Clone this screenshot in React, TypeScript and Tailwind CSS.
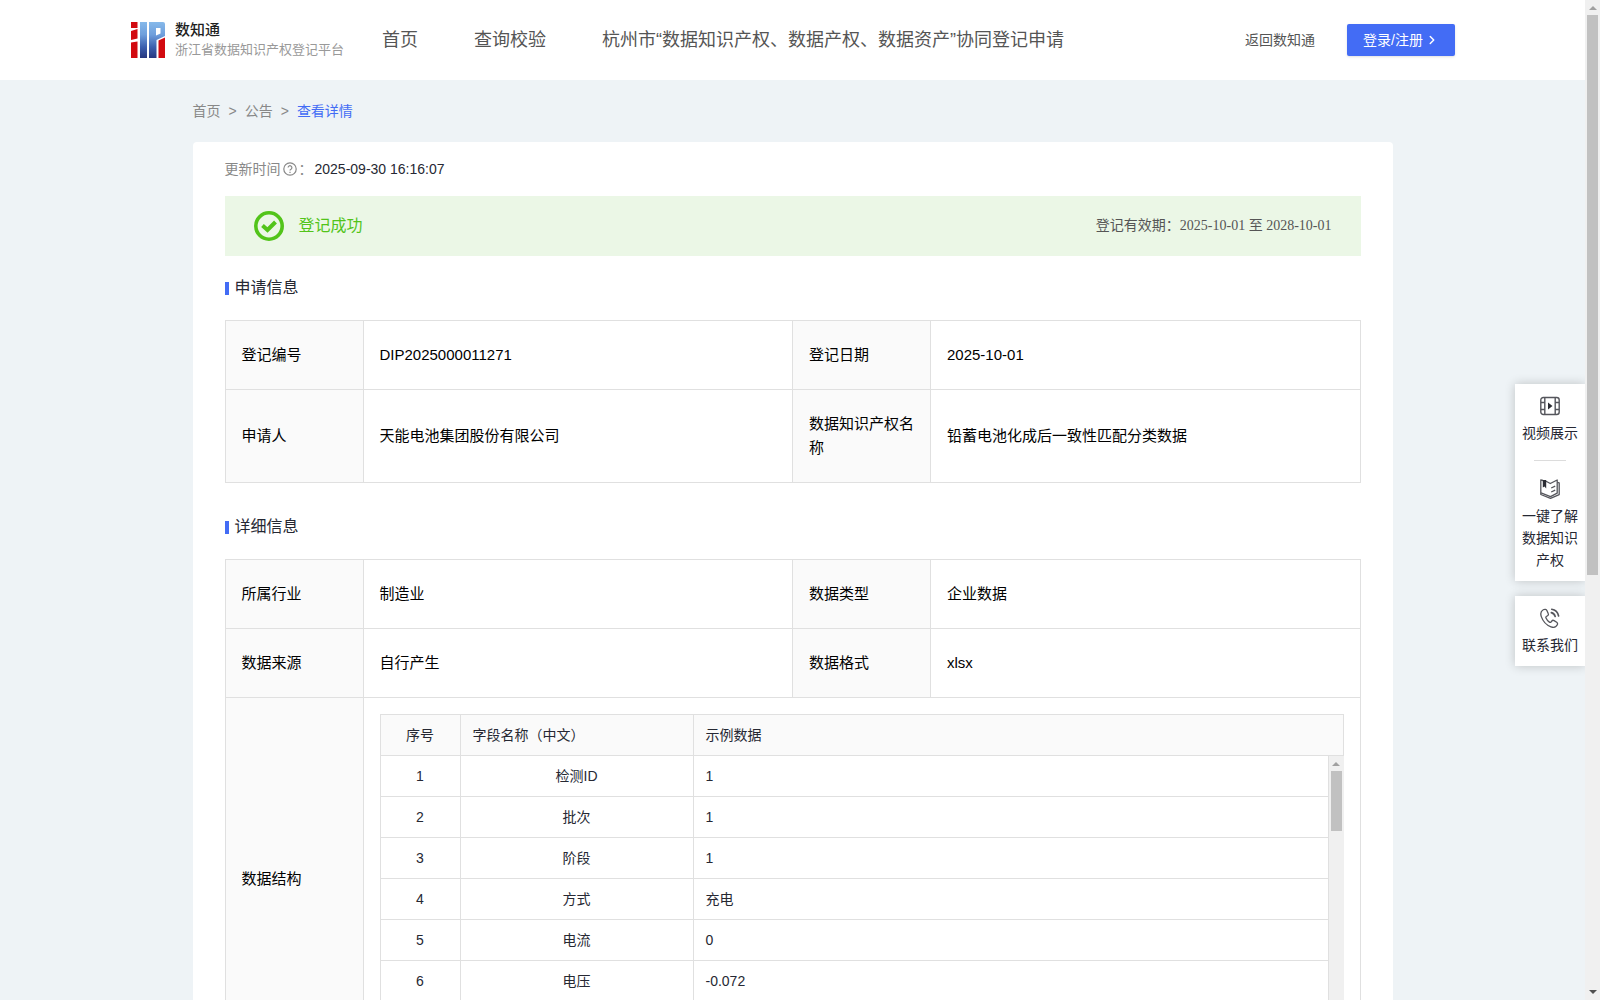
import React from 'react';
import { ChevronRight } from 'lucide-react';

interface FieldRow {
  name: string;
  sample: string;
}

const navItems = ['首页', '查询校验', '杭州市“数据知识产权、数据产权、数据资产”协同登记申请'];

const fields: FieldRow[] = [
  { name: '检测ID', sample: '1' },
  { name: '批次', sample: '1' },
  { name: '阶段', sample: '1' },
  { name: '方式', sample: '充电' },
  { name: '电流', sample: '0' },
  { name: '电压', sample: '-0.072' },
];

const Logo = () => (
  <svg width="34" height="36" viewBox="0 0 34 36" aria-hidden="true">
    <defs>
      <linearGradient id="logo-blue" gradientUnits="userSpaceOnUse" x1="0" y1="0" x2="0" y2="36">
        <stop offset="0" stopColor="#86b9ea" />
        <stop offset="0.35" stopColor="#6f9fdc" />
        <stop offset="0.7" stopColor="#3c5fae" />
        <stop offset="1" stopColor="#27377f" />
      </linearGradient>
    </defs>
    <path d="M0 0h6.500v6H0zM0 9l6.500-2v9.500L0 18zM0 20.500l6.500-1V36H0z" fill="#d20a10" />
    <path d="M9 0h7v36H9z" fill="url(#logo-blue)" />
    <path d="M18 0h14q2 0 2 2v12l-8.500 4v18H18z" fill="url(#logo-blue)" />
    <path d="M25 6h4.500v5.500L25 13.500z" fill="#fff" />
    <path d="M27.500 18.500l6.500-3V36h-6.500z" fill="#d20a10" />
  </svg>
);

const VideoIcon = () => (
  <svg width="20" height="20" viewBox="0 0 20 20" fill="none" stroke="#55565c" strokeWidth="1.4" aria-hidden="true">
    <rect x="0.8" y="1.5" width="18.4" height="17" rx="2.5" />
    <path d="M4.800 1.500v17M15.200 1.500v17M1 6.500h3.800M1 13.500h3.800M15.200 6.500H19M15.200 13.500H19" />
    <path d="M8 6.500l4.500 3.500L8 13.500z" fill="#2b2c33" stroke="none" />
  </svg>
);

const BookIcon = () => (
  <svg width="20" height="20" viewBox="0 0 20 20" fill="none" stroke="#55565c" strokeWidth="1.3" strokeLinejoin="round" aria-hidden="true">
    <path d="M3 1.500L.8 1v14.500l9.700 3.900 8.700-3.800V3.800l-2-.5" />
    <path d="M6 2.200l4.300 2.300L17.200 1v13.200l-6.700 3.400L1 13.800" />
    <path d="M11.200 9l4-1.800M11.200 13l4-1.800" />
    <path d="M2.800 1h3.400v8.500L4.500 7.600 2.800 8.400z" fill="#2b2c33" stroke="none" />
  </svg>
);

const PhoneIcon = () => (
  <svg width="20" height="20" viewBox="0 0 20 20" fill="none" stroke="#55565c" strokeWidth="1.3" strokeLinejoin="round" strokeLinecap="round" aria-hidden="true">
    <path d="M3.200 1.800C1 3 .3 5.600 1.300 8.600c1.700 4.800 5.200 8.600 9.700 10.200 2.800 1 5.400.1 6.400-2.200.4-1 .1-1.700-.7-2.300l-2.600-1.700c-.9-.5-1.700-.4-2.300.4l-.8 1c-.5.5-1 .5-1.600.1-1.500-1-2.700-2.500-3.400-4.100-.3-.7-.2-1.200.4-1.500l1.100-.7c.9-.5 1.100-1.300.7-2.200L7 2.700C6.300 1.200 4.700.9 3.200 1.800z" />
    <path d="M11.300 4.600c2 .5 3.400 1.900 3.900 3.900M11.700 1.300c3.600.6 6.200 3.200 6.900 6.700" strokeWidth="1.600" />
  </svg>
);

const SectionTitle = ({ children }: { children: React.ReactNode }) => (
  <h2 className="flex h-16 items-center gap-1.5 text-base text-[#262833]">
    <span className="h-[13px] w-1 bg-[#436cf5]" />
    {children}
  </h2>
);

const Label = ({ children }: { children: React.ReactNode }) => (
  <th scope="row" className="w-[138px] border border-[#e0e0e0] bg-[#fafafa] px-4 py-[22px] text-left font-normal">
    {children}
  </th>
);

const Value = ({ children }: { children: React.ReactNode }) => (
  <td className="border border-[#e0e0e0] px-4 py-[22px]">{children}</td>
);

const InfoTable = ({ children }: { children: React.ReactNode }) => (
  <table className="w-full table-fixed border-collapse text-[15px] leading-6 text-black">
    <tbody>{children}</tbody>
  </table>
);

const ArrowUp = () => (
  <svg className="shrink-0" width="8" height="4" viewBox="0 0 8 4" aria-hidden="true">
    <path d="M4 0l4 4H0z" fill="#a0a0a0" />
  </svg>
);

const DataStructure = () => (
  <div className="text-sm text-[#262833]">
    <table className="w-full table-fixed border-separate border-spacing-0 border border-[#e0e0e0] bg-[#fafafa]">
      <thead>
        <tr className="h-10">
          <th className="w-20 border-r border-[#e0e0e0] font-normal">序号</th>
          <th className="w-[233px] border-r border-[#e0e0e0] px-3 text-left font-normal">字段名称（中文）</th>
          <th className="px-3 text-left font-normal">示例数据</th>
        </tr>
      </thead>
    </table>
    <div className="flex h-[287px] overflow-hidden">
      <div className="flex-1">
        <table className="w-full table-fixed border-separate border-spacing-0">
          <tbody>
            {fields.map((field, index) => (
              <tr key={field.name} className="h-[41px]">
                <td className="w-[81px] border-x border-b border-[#e0e0e0] text-center">{index + 1}</td>
                <td className="w-[233px] border-r border-b border-[#e0e0e0] text-center">{field.name}</td>
                <td className="border-r border-b border-[#e0e0e0] px-3">{field.sample}</td>
              </tr>
            ))}
          </tbody>
        </table>
      </div>
      <div className="flex w-[15px] flex-col items-center bg-[#f0f0f0] pt-1.5">
        <ArrowUp />
        <div className="mt-[5px] h-[60px] w-[11px] bg-[#c1c1c1]" />
      </div>
    </div>
  </div>
);

const Header = () => (
  <header className="flex h-20 items-center bg-white px-[130px] pb-px">
    <a href="#" className="ml-px flex items-center gap-2.5">
      <Logo />
      <span className="flex flex-col">
        <span className="text-[15px] leading-5 font-medium text-[#1f1f1f]">数知通</span>
        <span className="text-[13px] leading-5 text-[#999]">浙江省数据知识产权登记平台</span>
      </span>
    </a>
    <nav className="ml-[38px] flex gap-14 text-lg whitespace-nowrap text-[#555]">
      {navItems.map((item) => (
        <a key={item} href="#">{item}</a>
      ))}
    </nav>
    <a href="#" className="ml-auto text-sm whitespace-nowrap text-[#555]">返回数知通</a>
    <button type="button" className="ml-8 flex h-8 w-[108px] items-center rounded-xs bg-[#436cf5] pl-4 text-sm text-white shadow-sm">
      登录/注册
      <ChevronRight size={14} strokeWidth={2.5} className="ml-0.5" />
    </button>
  </header>
);

const sideItem = 'flex w-full flex-col items-center text-sm leading-[22px] text-[#262833]';

const SideBar = () => (
  <aside className="absolute top-[384px] right-0 flex w-[70px] flex-col gap-[15px]">
    <div className="flex flex-col items-center bg-white px-1.5 pt-3 pb-2.5 shadow-[0_0_10px_rgba(0,0,0,0.2)]">
      <button type="button" className={sideItem}>
        <VideoIcon />
        <span className="mt-1.5">视频展示</span>
      </button>
      <hr className="mt-4 mb-[18px] w-8 border-[#dcdcdc]" />
      <button type="button" className={sideItem}>
        <BookIcon />
        <span className="mt-1.5">一键了解数据知识产权</span>
      </button>
    </div>
    <div className="bg-white px-1.5 pt-3 pb-2.5 shadow-[0_0_10px_rgba(0,0,0,0.2)]">
      <button type="button" className={sideItem}>
        <PhoneIcon />
        <span className="mt-1.5">联系我们</span>
      </button>
    </div>
  </aside>
);

export default function App() {
  return (
    <div className="flex h-screen overflow-hidden bg-[#eef3f6] font-['Liberation_Sans','Noto_Sans_CJK_SC',sans-serif]">
      <div className="relative min-w-0 flex-1 overflow-hidden">
        <Header />
        <main className="mx-auto w-full max-w-[1200px]">
          <nav className="flex h-[62px] items-center gap-2 text-sm text-[#888]">
            <a href="#">首页</a>
            <span>&gt;</span>
            <a href="#">公告</a>
            <span>&gt;</span>
            <a href="#" className="text-[#436cf5]">查看详情</a>
          </nav>

          <section className="rounded bg-white px-8 pb-8">
            <div className="flex h-[54px] items-center text-sm text-[#888]">
              更新时间
              <svg className="ml-0.5" width="14" height="14" viewBox="0 0 14 14" fill="none" stroke="#888" strokeWidth="1.2" aria-hidden="true">
                <circle cx="7" cy="7" r="6.2" />
                <path d="M5.100 5.600a1.900 1.900 0 1 1 2.900 1.600c-.7.4-1 .7-1 1.300M7 9.700v1.200" />
              </svg>
              <span className="ml-0.5">：</span>
              <span className="ml-0.5 text-[#262833]">2025-09-30 16:16:07</span>
            </div>

            <div className="flex h-[60px] items-center bg-[#ebf7e6] px-[29px]">
              <svg width="30" height="30" viewBox="0 0 30 30" fill="none" stroke="#52c41a" aria-hidden="true">
                <circle cx="15" cy="15" r="13.2" strokeWidth="3.6" />
                <path d="M8.500 14.500l5 4.500 8-8" strokeWidth="4" />
              </svg>
              <span className="ml-[15px] text-base text-[#52c41a]">登记成功</span>
              <span className="ml-auto font-['Liberation_Serif','Noto_Sans_CJK_SC',serif] text-sm text-[#555]">
                登记有效期：2025-10-01 至 2028-10-01
              </span>
            </div>

            <SectionTitle>申请信息</SectionTitle>
            <InfoTable>
              <tr>
                <Label>登记编号</Label>
                <Value>DIP2025000011271</Value>
                <Label>登记日期</Label>
                <Value>2025-10-01</Value>
              </tr>
              <tr>
                <Label>申请人</Label>
                <Value>天能电池集团股份有限公司</Value>
                <Label>数据知识产权名称</Label>
                <Value>铅蓄电池化成后一致性匹配分类数据</Value>
              </tr>
            </InfoTable>

            <div className="mt-3">
              <SectionTitle>详细信息</SectionTitle>
            </div>
            <InfoTable>
              <tr>
                <Label>所属行业</Label>
                <Value>制造业</Value>
                <Label>数据类型</Label>
                <Value>企业数据</Value>
              </tr>
              <tr>
                <Label>数据来源</Label>
                <Value>自行产生</Value>
                <Label>数据格式</Label>
                <Value>xlsx</Value>
              </tr>
              <tr>
                <Label>数据结构</Label>
                <td colSpan={3} className="border border-[#e0e0e0] p-4">
                  <DataStructure />
                </td>
              </tr>
            </InfoTable>
          </section>
        </main>
        <SideBar />
      </div>

      <div className="flex h-full w-[15px] shrink-0 flex-col items-center bg-[#f0f0f0]">
        <div className="flex h-[15px] shrink-0 items-center">
          <ArrowUp />
        </div>
        <div className="h-[56%] w-[11px] bg-[#c1c1c1]" />
        <svg className="mt-auto mb-1.5" width="8" height="4" viewBox="0 0 8 4" aria-hidden="true">
          <path d="M4 4L0 0h8z" fill="#505050" />
        </svg>
      </div>
    </div>
  );
}
